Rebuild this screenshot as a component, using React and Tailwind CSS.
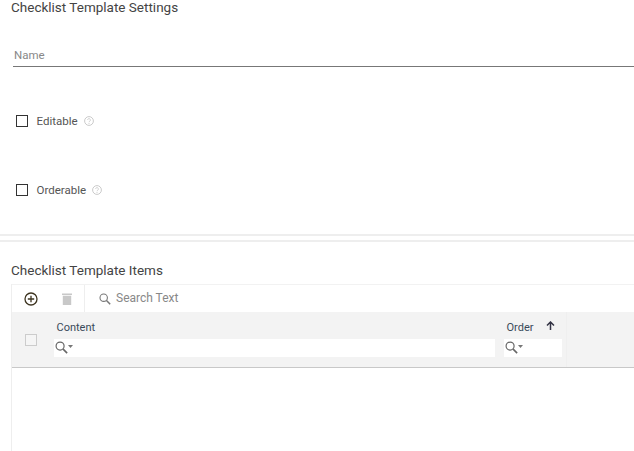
import React from 'react';

function HelpIcon() {
  return (
    <svg width="10" height="10" viewBox="0 0 10 10" fill="none" className="ml-[6px] mt-[-1px]">
      <circle cx="5" cy="5" r="4.4" stroke="#c4c4c4" strokeWidth="0.9" />
      <path d="M3.6 4a1.4 1.4 0 1 1 2.2 1.2c-.5.3-.8.5-.8 1" stroke="#c4c4c4" strokeWidth="0.8" />
      <circle cx="5" cy="7.5" r="0.5" fill="#c4c4c4" />
    </svg>
  );
}

function CheckRow({ label, className }) {
  return (
    <div className={`flex items-center pl-[16px] ${className}`}>
      <span className="h-[12px] w-[12px] border border-[#333333] bg-white" />
      <span className="ml-[8.5px] text-[11.5px] leading-[14px] text-[#555555]">{label}</span>
      <HelpIcon />
    </div>
  );
}

function Search({ size = 12, color = '#666666' }) {
  return (
    <svg width={size} height={size} viewBox="0 0 12 12" fill="none">
      <circle cx="4.7" cy="4.7" r="3.7" stroke={color} strokeWidth="1.1" />
      <path d="M7.5 7.5L11.2 11.2" stroke={color} strokeWidth="1.5" />
    </svg>
  );
}

function FilterIcon() {
  return (
    <div className="flex items-center pb-[1px] pl-[1px]">
      <Search size={13} />
      <svg width="5" height="3" viewBox="0 0 5 3" className="mt-[-3px]">
        <path d="M0 0H5L2.5 3Z" fill="#777777" />
      </svg>
    </div>
  );
}

export default function App() {
  return (
    <div className="h-[451px] w-[634px] overflow-hidden bg-white font-['Roboto',sans-serif]">
      <h2 className="pl-[11px] text-[13.5px] leading-[15px] font-normal text-[#444444]">Checklist Template Settings</h2>

      <div className="ml-[13px] mt-[24px] h-[28px] border-b border-[#777777] pl-[1px] pt-[9px] text-[11.5px] leading-[14px] text-[#888888]">Name</div>

      <CheckRow label="Editable" className="mt-[47px] h-[14px]" />
      <CheckRow label="Orderable" className="mt-[55px] h-[14px]" />

      <div className="mt-[37px] h-[8px] border-y-2 border-[#eeeeee]" />

      <h2 className="pl-[11px] pt-[21px] text-[13.5px] leading-[15px] font-normal text-[#444444]">Checklist Template Items</h2>

      <div className="ml-[11px] mt-[6px] border-l border-[#eeeeee]">
        <div className="flex h-[28px] items-center border-t border-[#f2f2f2]">
          <div className="flex h-full w-[73px] items-center border-r border-[#eeeeee] pl-[12px]">
            <svg width="14" height="14" viewBox="0 0 14 14" fill="none">
              <circle cx="7" cy="7" r="6" stroke="#3d3420" strokeWidth="1.3" />
              <path d="M7 3.8V10.2M3.8 7H10.2" stroke="#3d3420" strokeWidth="1.3" />
            </svg>
            <svg width="10" height="12" viewBox="0 0 10 12" className="ml-[24px]">
              <path d="M0 0.5H10V2H0ZM0.8 2.8H9.2V12H0.8Z" fill="#c8c8c8" />
            </svg>
          </div>
          <div className="ml-[14px] flex items-center">
            <Search size={12} color="#777777" />
            <span className="ml-[5px] mt-[-1px] text-[12px] leading-[14px] text-[#888888]">Search Text</span>
          </div>
        </div>

        <div className="flex h-[56px] border-b border-[#c8c8c8] bg-[#f3f3f3]">
          <div className="flex w-[42px] items-center pl-[13px]">
            <span className="h-[12px] w-[12px] border border-[#cccccc] bg-[#f5f5f5]" />
          </div>
          <div className="flex w-[450px] flex-col pt-[9px]">
            <span className="pl-[2.5px] text-[11px] leading-[14px] text-[#3a4a5a]">Content</span>
            <div className="mt-[4px] flex h-[18px] w-[441px] items-center bg-white">
              <FilterIcon />
            </div>
          </div>
          <div className="flex w-[63px] flex-col border-r border-[#efefef] pt-[9px]">
            <div className="flex items-center justify-between pl-[2.5px] pr-[11.5px]">
              <span className="text-[11px] leading-[14px] text-[#3a4a5a]">Order</span>
              <svg width="9" height="9" viewBox="0 0 9 9" fill="none" className="mt-[-6px]">
                <path d="M4.5 9V1.5M1 4.5L4.5 1L8 4.5" stroke="#333344" strokeWidth="1.5" />
              </svg>
            </div>
            <div className="mt-[4px] flex h-[18px] w-[58px] items-center bg-white">
              <FilterIcon />
            </div>
          </div>
        </div>

        <div className="h-[84px]" />
      </div>
    </div>
  );
}
